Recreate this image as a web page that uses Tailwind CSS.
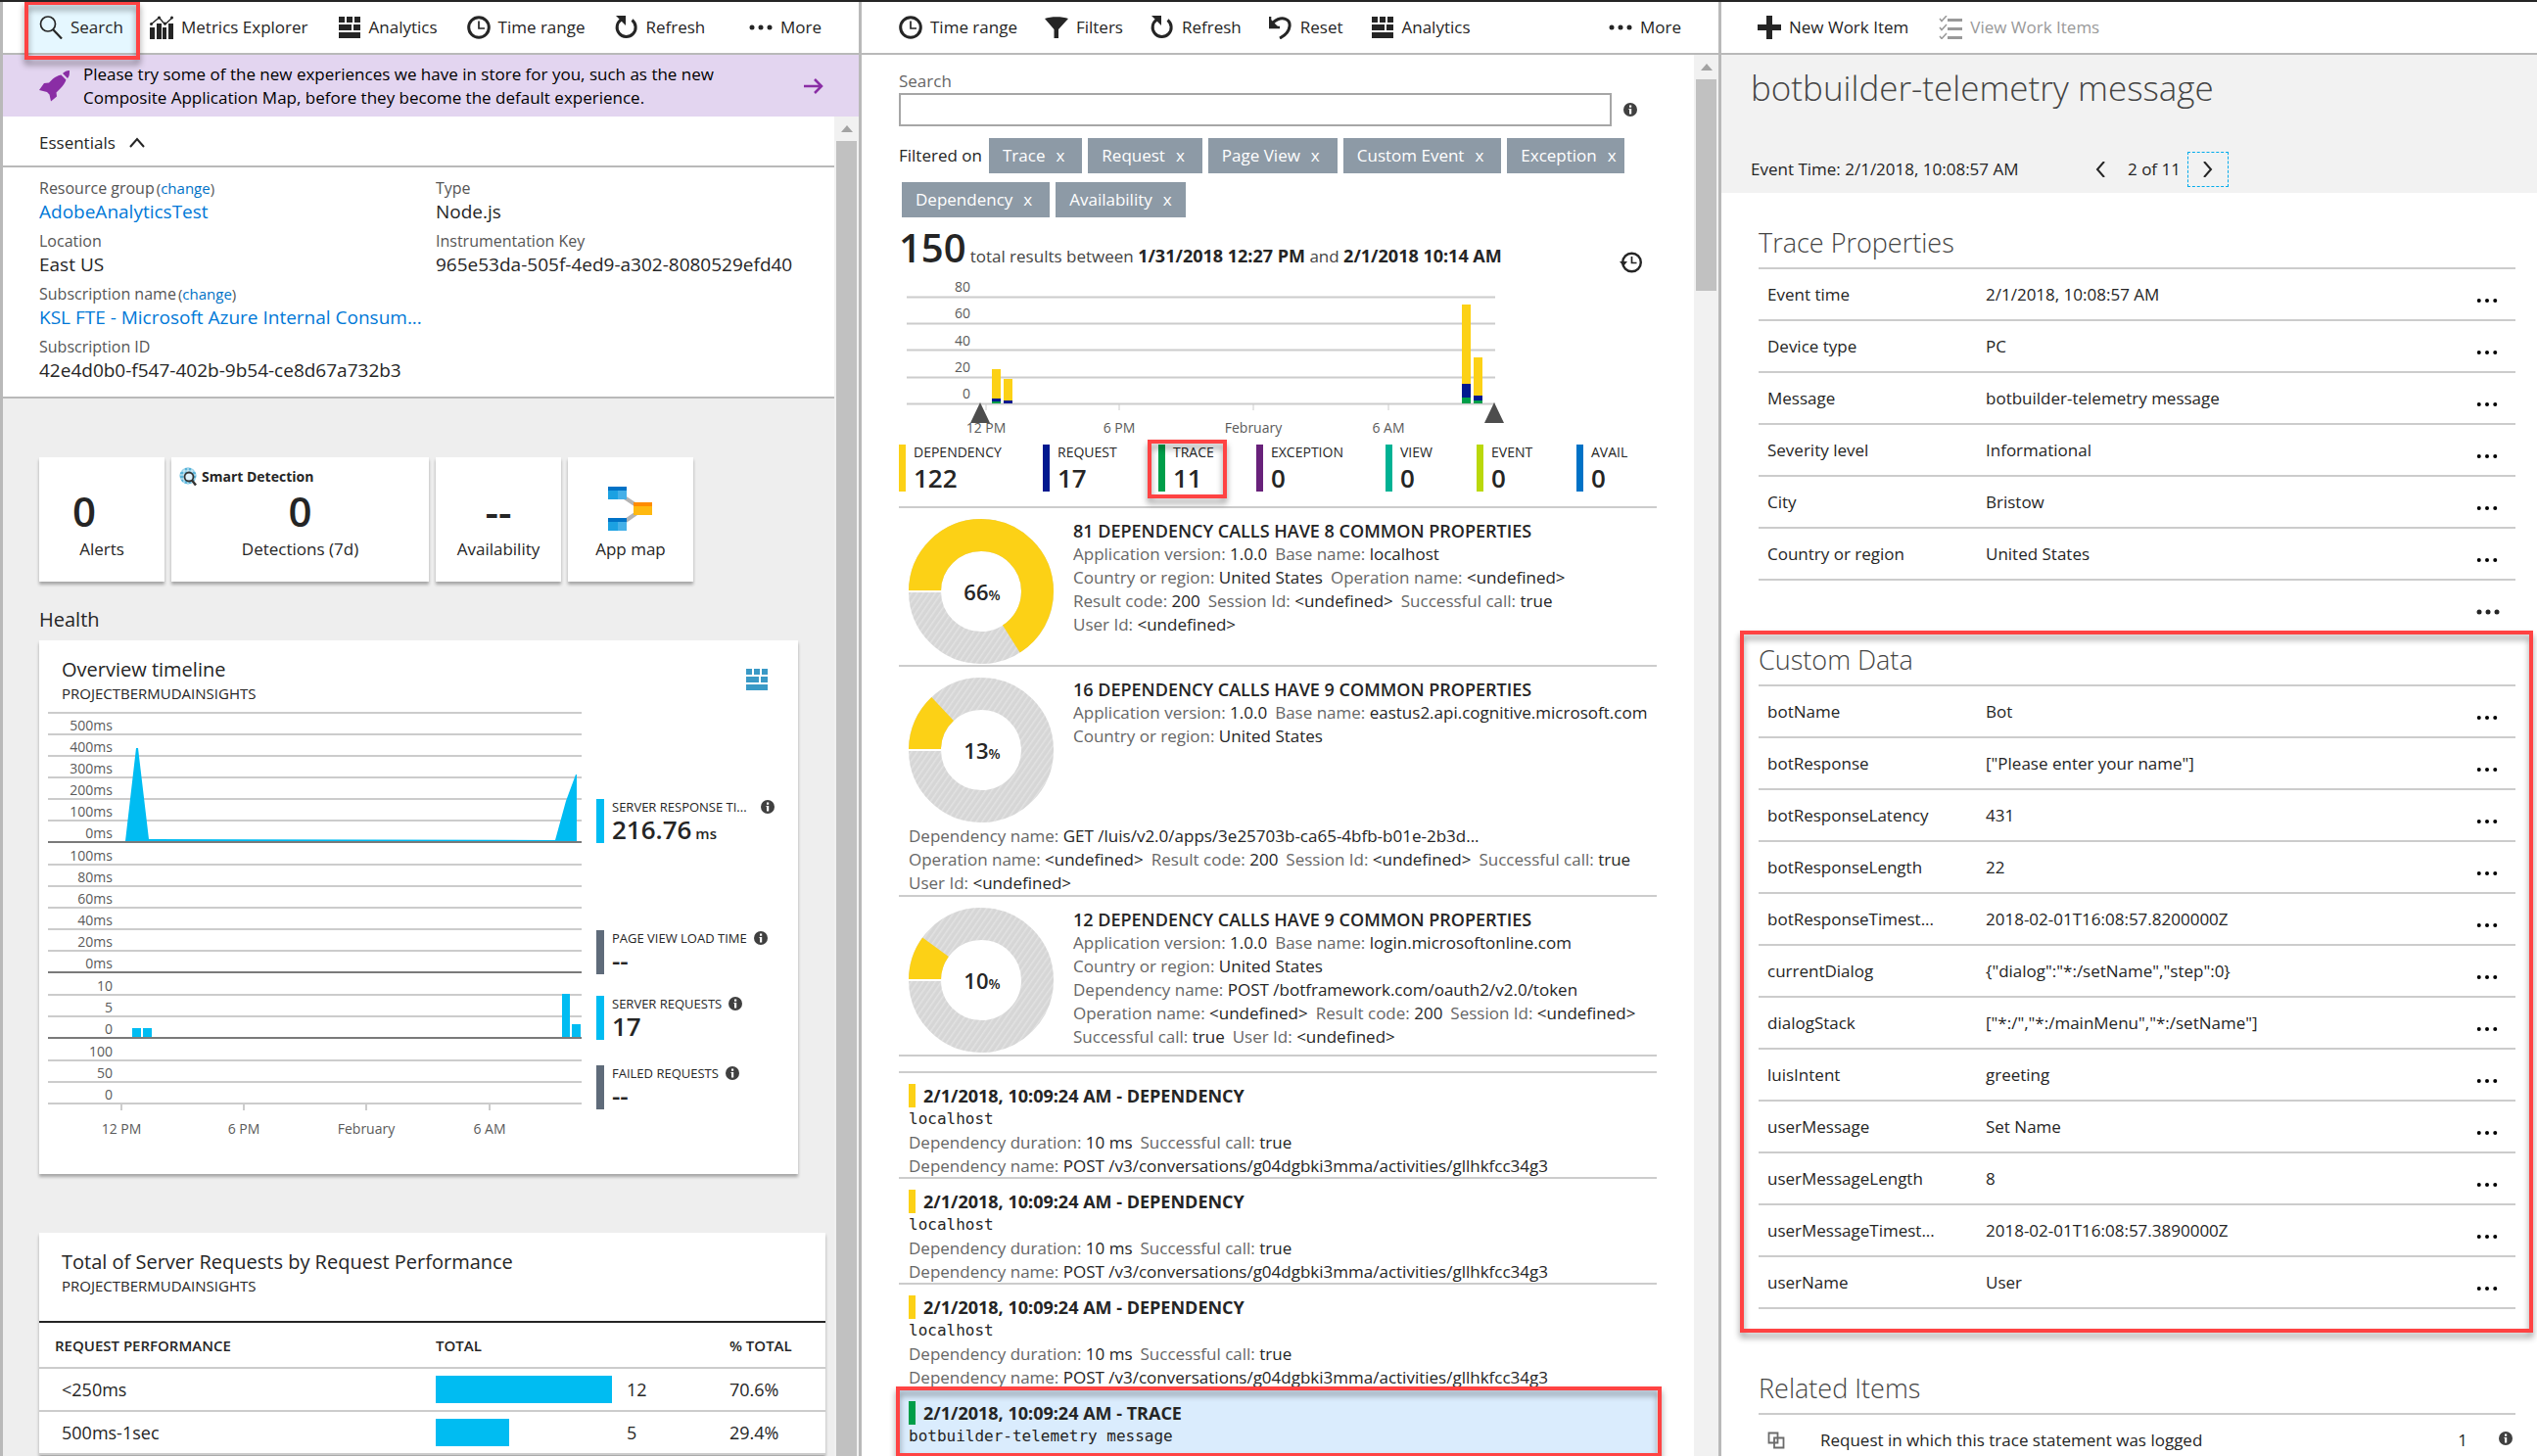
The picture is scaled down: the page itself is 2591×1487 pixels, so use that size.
<!DOCTYPE html>
<html lang="en">
<head>
<meta charset="utf-8">
<title>Application Insights</title>
<script src="https://cdn.jsdelivr.net/npm/@tailwindcss/browser@4"></script>
</head>
<body class="h-screen overflow-hidden bg-white font-['Open_Sans','Noto_Sans',sans-serif] text-[17px] leading-6 text-[#252525]">

<svg class="absolute size-0" aria-hidden="true">
  <symbol id="i-search" viewBox="0 0 24 24"><circle cx="9" cy="8.500" r="7.500" fill="none" stroke="currentColor" stroke-width="1.700"/><path d="M14 14l9 9.500" stroke="currentColor" stroke-width="2.200"/></symbol>
  <symbol id="i-metrics" viewBox="0 0 24 24"><path d="M0 12h5v12H0zM7 8h5v16H7zM13 12h4v12h-4zM19 8h5v16h-5z" fill="currentColor"/><path d="M1 9l8.500-7 6 7L23 2" fill="none" stroke="currentColor" stroke-width="1.300"/><circle cx="1.500" cy="8.500" r="1.500" fill="currentColor"/><circle cx="9.500" cy="2" r="1.600" fill="currentColor"/><circle cx="15.500" cy="8" r="1.500" fill="currentColor"/><circle cx="22.500" cy="2" r="1.500" fill="currentColor"/></symbol>
  <symbol id="i-analytics" viewBox="0 0 24 24"><path d="M1 1h6v6H1zM9 1h6v6H9zM17 1h6v6h-6zM1 9h13v6H1zM16 9h7v6h-7zM1 17h22v6H1z" fill="currentColor"/></symbol>
  <symbol id="i-clock" viewBox="0 0 24 24"><circle cx="12" cy="12" r="10.300" fill="none" stroke="currentColor" stroke-width="3"/><path d="M12 5.500V13h6" fill="none" stroke="currentColor" stroke-width="1.700"/></symbol>
  <symbol id="i-refresh" viewBox="0 0 24 24"><path d="M17.500 4.500A9.500 9.500 0 1 1 6.500 4" fill="none" stroke="currentColor" stroke-width="3"/><path d="M1 0h10v10z" fill="currentColor"/></symbol>
  <symbol id="i-reset" viewBox="0 0 24 24"><path d="M4 7C14-1 22 4 21 11c-.6 5-4 9-10 12" fill="none" stroke="currentColor" stroke-width="3"/><path d="M1 1v11h10" fill="none" stroke="currentColor" stroke-width="2.600"/><path d="M1 12V3l8 8z" fill="currentColor"/></symbol>
  <symbol id="i-filter" viewBox="0 0 24 24"><path d="M0 3l9.500 11v9h4.500v-9L24 3c-6-2.500-18-2.500-24 0z" fill="currentColor"/></symbol>
  <symbol id="i-dots" viewBox="0 0 24 24"><circle cx="3" cy="12" r="2.500" fill="currentColor"/><circle cx="12" cy="12" r="2.500" fill="currentColor"/><circle cx="21" cy="12" r="2.500" fill="currentColor"/></symbol>
  <symbol id="i-plus" viewBox="0 0 24 24"><path d="M9 0h6v9h9v6h-9v9H9v-9H0V9h9z" fill="currentColor"/></symbol>
  <symbol id="i-list" viewBox="0 0 24 24"><path d="M9 3h15v3H9zM9 12h15v3H9zM9 21h15v3H9z" fill="currentColor"/><path d="M1 3l2 2.500L8 0M1 12l2 2.500L8 9M1 21l2 2.500L8 18" fill="none" stroke="currentColor" stroke-width="1.500"/></symbol>
  <symbol id="i-info" viewBox="0 0 14 14"><circle cx="7" cy="7" r="7" fill="#404040"/><path d="M6 2.500h2.200v2.200H6zM5.500 6h2.700v5.500H6V7h-.5z" fill="#fff"/></symbol>
  <symbol id="i-history" viewBox="0 0 24 24"><circle cx="12.500" cy="12" r="9.300" fill="none" stroke="currentColor" stroke-width="2.400"/><path d="M0 11h8l-4 5z" fill="currentColor"/><path d="M12.500 6v6.500h5" fill="none" stroke="currentColor" stroke-width="1.700"/></symbol>
  <symbol id="i-copy" viewBox="0 0 18 18"><path d="M1.500 1.500h9v10h-9zM7 6.500h9.500v10H7z" fill="none" stroke="#6b6b6b" stroke-width="1.800"/></symbol>
  <pattern id="hatch" width="5" height="5" patternUnits="userSpaceOnUse" patternTransform="rotate(35)"><rect width="5" height="5" fill="#d6d6d6"/><rect width="1.500" height="5" fill="#e2e2e2"/></pattern>
</svg>

<div class="grid h-full grid-cols-[877fr_878fr_836fr] border-t-2 border-[#252525]">

  <!-- Overview blade -->
  <section class="flex min-w-0 flex-col overflow-hidden border-l-[3px] border-[#b9b9b9]">
    <div class="flex h-[54px] shrink-0 items-center gap-[30px] border-b-2 border-[#b9b9b9] pl-[22px] pr-[38px]">
      <div class="relative -mr-5 flex h-full w-[118px] items-center bg-[#e5f7ff]">
        <button class="flex items-center gap-2 pl-[15px]"><svg class="size-6"><use href="#i-search"/></svg>Search</button>
        <div class="absolute inset-x-0 -top-px z-10 h-[60px] border-4 border-[#ff4343] drop-shadow-[0_5px_3px_rgba(0,0,0,0.4)]"></div>
      </div>
      <button class="flex items-center gap-2"><svg class="size-6"><use href="#i-metrics"/></svg>Metrics Explorer</button>
      <button class="flex items-center gap-2"><svg class="size-6"><use href="#i-analytics"/></svg>Analytics</button>
      <button class="flex items-center gap-2"><svg class="size-6"><use href="#i-clock"/></svg>Time range</button>
      <button class="flex items-center gap-2"><svg class="size-6"><use href="#i-refresh"/></svg>Refresh</button>
      <button class="ml-auto flex items-center gap-2"><svg class="size-6"><use href="#i-dots"/></svg>More</button>
    </div>

    <a href="#" class="flex h-[63px] shrink-0 items-center bg-[#e3d5f0] pl-[37px] pr-9 text-black">
      <svg class="mr-[13px] size-8 shrink-0" viewBox="0 0 32 32" fill="#8a2da5"><path d="M31 0c-3 0-5 1-7 3l5 5c2-2 2-5 2-8zM22.500 4.500l5 5c-1 3-3 6-6 9l-4 4 .5 4-6 5-1.500-7-2.500-2.500L0 20l5-7 5-.5 4-4c3-2 5-3.500 8.500-4z"/></svg>
      <span class="w-[660px]">Please try some of the new experiences we have in store for you, such as the new Composite Application Map, before they become the default experience.</span>
      <svg class="ml-auto size-5 shrink-0" viewBox="0 0 20 20" fill="none" stroke="#8a2da5" stroke-width="2.500"><path d="M0 10h18M11 3l7 7-7 7"/></svg>
    </a>

    <div class="flex min-h-0 flex-1">
      <div class="min-w-0 flex-1 overflow-hidden bg-[#eee]">
        <div class="bg-white">
          <button class="flex h-[52px] w-full items-center gap-[14px] border-b-2 border-[#b9b9b9] pl-[37px] pt-1">Essentials <svg class="size-4" viewBox="0 0 16 16" fill="none" stroke="#252525" stroke-width="2"><path d="M1 12l7-8 7 8"/></svg></button>
          <div class="grid h-[236px] grid-cols-[405px_1fr] border-b-2 border-[#b9b9b9] pl-[37px] pt-[9px]">
            <dl id="ess-left"></dl>
            <dl id="ess-right"></dl>
          </div>
        </div>

        <div class="px-[37px] pt-[60px]">
          <div class="flex gap-[7px] text-center">
            <div class="h-[127px] w-32 bg-white pt-7 shadow-[0_3px_3px_rgba(0,0,0,0.3)]"><div class="pr-9 text-[42px] leading-[54px] font-semibold">0</div>Alerts</div>
            <div class="relative h-[127px] w-[263px] bg-white pt-7 shadow-[0_3px_3px_rgba(0,0,0,0.3)]">
              <div class="absolute left-2 top-2 flex items-center gap-[3px] text-[14px] font-bold"><svg class="size-5" viewBox="0 0 20 20"><circle cx="9" cy="9" r="8.500" fill="#59b4d9"/><path d="M2 4h14M1 8h16M1 12h16M5 1v15M9 1v16M13 1v15" stroke="#e5f4fb" stroke-width="1"/><circle cx="10" cy="10" r="4.500" fill="#dff1fa" stroke="#333" stroke-width="1.800"/><path d="M13 13.500l4 5" stroke="#333" stroke-width="2.500"/></svg>Smart Detection</div>
              <div class="text-[42px] leading-[54px] font-semibold">0</div>Detections (7d)</div>
            <div class="h-[127px] w-32 bg-white pt-7 shadow-[0_3px_3px_rgba(0,0,0,0.3)]"><div class="text-[42px] leading-[54px] font-semibold">--</div>Availability</div>
            <div class="h-[127px] w-32 bg-white pt-7 shadow-[0_3px_3px_rgba(0,0,0,0.3)]">
              <div class="flex h-[54px] items-center justify-center pb-1"><svg class="h-[46px] w-[46px]" viewBox="0 0 46 46"><path d="M12 8l23 15-23 16" fill="none" stroke="#b3b3b3" stroke-width="4"/><path d="M0 0h19v13H0zM0 32h19v13H0z" fill="#1ba1e2"/><path d="M10 0h9v13h-9zM10 32h9v13h-9z" fill="#45b0e8"/><path d="M0 0h19v4H0zM0 32h19v4H0z" fill="#0072c6"/><path d="M26 16h19v13H26z" fill="#ffb910"/><path d="M26 16h19v4H26z" fill="#ff8c00"/></svg></div>App map</div>
          </div>
          <h2 class="mt-6 text-[20px] leading-[30px]">Health</h2>

          <div class="mt-[6px] h-[545px] w-[775px] bg-white pt-4 shadow-[0_3px_3px_rgba(0,0,0,0.3)]">
            <div class="flex items-start justify-between pl-[23px] pr-[30px]">
              <div><h3 class="text-[20px] leading-7">Overview timeline</h3><p class="text-[15px] leading-5">PROJECTBERMUDAINSIGHTS</p></div>
              <svg class="mt-3 size-6 text-[#3999c6]"><use href="#i-analytics"/></svg>
            </div>
            <div class="mt-2 flex pl-[9px]">
              <svg class="h-[440px] w-[550px] shrink-0 text-[14px]" viewBox="0 0 550 440" fill="#5a5a5a">
                <g id="tl-grid"></g>
                <path d="M79 133L90 38l2 0L103 131h4L518 132 529 92 539 65h1V133z" fill="#00bcf2"/>
                <path d="M86 324h9v9h-9zM97 324h9v9h-9zM525 289h8v44h-8zM535 320h9v13h-9z" fill="#00bcf2"/>
                <g text-anchor="middle"><text x="75" y="432">12 PM</text><text x="200" y="432">6 PM</text><text x="325" y="432">February</text><text x="451" y="432">6 AM</text></g>
              </svg>
              <div id="tl-legend" class="ml-[10px] flex flex-col pt-[90px]"></div>
            </div>
          </div>

          <div class="-mr-7 mt-[60px] w-[803px] bg-white pt-4 shadow-[0_3px_3px_rgba(0,0,0,0.3)]">
            <h3 class="pl-[23px] text-[20px] leading-7">Total of Server Requests by Request Performance</h3>
            <p class="pl-[23px] text-[15px] leading-5">PROJECTBERMUDAINSIGHTS</p>
            <table class="mt-[26px] w-full table-fixed text-left">
              <thead><tr class="h-[47px] border-y-2 border-b-[#ccc] border-t-[#252525] text-[15px]"><th class="w-[405px] pl-4 font-semibold">REQUEST PERFORMANCE</th><th class="w-[195px] font-semibold">TOTAL</th><th class="w-[105px]"></th><th class="font-semibold">% TOTAL</th></tr></thead>
              <tbody class="text-[18px]">
                <tr class="h-11 border-b-2 border-[#ccc]"><td class="pl-[23px]">&lt;250ms</td><td><div class="h-7 w-[180px] bg-[#00bcf2]"></div></td><td>12</td><td>70.6%</td></tr>
                <tr class="h-11 border-b-2 border-[#ccc]"><td class="pl-[23px]">500ms-1sec</td><td><div class="h-7 w-[75px] bg-[#00bcf2]"></div></td><td>5</td><td>29.4%</td></tr>
              </tbody>
            </table>
          </div>
        </div>
      </div>
      <div class="flex w-[25px] flex-col items-center bg-[#f1f1f1]"><svg class="my-[9px] h-[7px] w-3" viewBox="0 0 12 7"><path d="M0 7l6-7 6 7z" fill="#a3a3a3"/></svg><div class="w-[21px] flex-1 bg-[#c1c1c1]"></div></div>
    </div>
  </section>

  <!-- Search blade -->
  <section class="flex min-w-0 flex-col overflow-hidden border-l-[3px] border-[#b9b9b9]">
    <div class="flex h-[54px] shrink-0 items-center gap-[28px] border-b-2 border-[#b9b9b9] pl-[38px] pr-[38px]">
      <button class="flex items-center gap-2"><svg class="size-6"><use href="#i-clock"/></svg>Time range</button>
      <button class="flex items-center gap-2"><svg class="size-6"><use href="#i-filter"/></svg>Filters</button>
      <button class="flex items-center gap-2"><svg class="size-6"><use href="#i-refresh"/></svg>Refresh</button>
      <button class="flex items-center gap-2"><svg class="size-6"><use href="#i-reset"/></svg>Reset</button>
      <button class="flex items-center gap-2"><svg class="size-6"><use href="#i-analytics"/></svg>Analytics</button>
      <button class="ml-auto flex items-center gap-2"><svg class="size-6"><use href="#i-dots"/></svg>More</button>
    </div>
    <div class="flex min-h-0 flex-1">
      <div class="min-w-0 flex-1 overflow-hidden pl-[38px] pr-[38px] pt-[15px]">
        <label for="q" class="block text-[#666]">Search</label>
        <div class="flex items-center gap-3">
          <input id="q" type="text" class="h-[34px] w-[728px] border-2 border-[#a6a6a6] px-2 outline-none">
          <svg class="size-[14px]"><use href="#i-info"/></svg>
        </div>
        <div id="chips-1" class="mt-3 flex items-center gap-[6px]"><span class="w-[86px] whitespace-nowrap">Filtered on</span></div>
        <div id="chips-2" class="mt-[9px] flex gap-[6px] pl-[3px]"></div>
        <div class="mt-1 flex h-14 items-end justify-between">
          <p class="leading-10 text-[#444]"><span class="mr-1 text-[40px] font-semibold text-[#252525]">150</span>total results between <b class="text-[18px] font-bold text-[#252525]">1/31/2018 12:27 PM</b> and <b class="text-[18px] font-bold text-[#252525]">2/1/2018 10:14 AM</b></p>
          <svg class="mb-[2px] mr-[14px] size-6"><use href="#i-history"/></svg>
        </div>
        <svg class="h-[168px] w-[640px] text-[14px]" viewBox="0 0 640 168" fill="#5a5a5a">
          <path d="M8 21.500h601M8 48.500h601M8 75.500h601M8 103.500h601M8 130.500h601" stroke="#ccc" stroke-width="2"/>
          <path d="M89 131v6M225 131v6M362 131v6M500 131v6" stroke="#ccc"/>
          <g text-anchor="end"><text x="73" y="16">80</text><text x="73" y="43">60</text><text x="73" y="71">40</text><text x="73" y="98">20</text><text x="73" y="125">0</text></g>
          <g text-anchor="middle"><text x="89" y="160">12 PM</text><text x="225" y="160">6 PM</text><text x="362" y="160">February</text><text x="500" y="160">6 AM</text></g>
          <path d="M95 95h9v30h-9zM107 105h9v22h-9zM575 29h9v81h-9zM587 83h9v39h-9z" fill="#fcd116"/>
          <path d="M95 125h9v3h-9zM107 127h9v3h-9zM575 110h9v14h-9zM587 122h9v5h-9z" fill="#00188f"/>
          <path d="M95 128h9v2h-9zM575 124h9v6h-9zM587 127h9v3h-9z" fill="#009e49"/>
          <path d="M83 129l10 21H73zM608 129l10 21h-20z" fill="#4d4d4d"/>
        </svg>
        <div id="stats" class="mt-[4px] flex h-[65px] border-b-2 border-[#ccc]"></div>

        <div id="clusters"></div>
        <div class="h-[17px] border-b-2 border-[#ccc]"></div>
        <div id="events"></div>
      </div>
      <div class="flex w-[25px] flex-col items-center bg-[#f1f1f1]"><svg class="my-[9px] h-[7px] w-3" viewBox="0 0 12 7"><path d="M0 7l6-7 6 7z" fill="#a3a3a3"/></svg><div class="h-[216px] w-[21px] bg-[#c1c1c1]"></div></div>
    </div>
  </section>

  <!-- Trace details blade -->
  <section class="flex min-w-0 flex-col overflow-hidden border-l-[3px] border-[#b9b9b9]">
    <div class="flex h-[54px] shrink-0 items-center gap-[31px] border-b-2 border-[#b9b9b9] pl-[37px]">
      <button class="flex items-center gap-2"><svg class="size-6"><use href="#i-plus"/></svg>New Work Item</button>
      <button class="flex items-center gap-2 text-[#999]" disabled><svg class="size-6"><use href="#i-list"/></svg>View Work Items</button>
    </div>
    <header class="h-[141px] shrink-0 bg-[#f2f2f2] pl-[30px] pt-[10px]">
      <h1 class="text-[35px] leading-[48px] font-light text-[#444]">botbuilder-telemetry message</h1>
      <div class="mt-[41px] flex h-9 items-center">
        <span class="w-[340px]">Event Time: 2/1/2018, 10:08:57 AM</span>
        <button class="w-[45px] pl-3" aria-label="Previous"><svg class="h-4 w-[10px]" viewBox="0 0 10 16" fill="none" stroke="#252525" stroke-width="2"><path d="M9 0L2 8l7 8"/></svg></button>
        <span class="w-[61px] whitespace-nowrap">2 of 11</span>
        <button class="flex h-9 w-[42px] items-center justify-center border border-dashed border-[#00abec]" aria-label="Next"><svg class="h-4 w-[10px]" viewBox="0 0 10 16" fill="none" stroke="#252525" stroke-width="2"><path d="M1 0l7 8-7 8"/></svg></button>
      </div>
    </header>
    <div class="pl-[38px] pr-[22px]">
      <h2 class="mt-[31px] h-[45px] text-[27px] leading-10 font-light text-[#444]">Trace Properties</h2>
      <table id="trace-props" class="w-full table-fixed border-t-2 border-[#ccc]"></table>
      <div class="flex h-[51px] items-center justify-end pr-4 pt-3"><button aria-label="More"><svg class="size-6"><use href="#i-dots"/></svg></button></div>
      <div class="relative h-[717px] pt-[10px]">
        <h2 class="h-[45px] text-[27px] leading-10 font-light text-[#444]">Custom Data</h2>
        <table id="custom-data" class="w-full table-fixed border-t-2 border-[#ccc]"></table>
        <div class="pointer-events-none absolute -left-[19px] -right-[18px] inset-y-0 border-4 border-[#ff4343] drop-shadow-[0_5px_3px_rgba(0,0,0,0.4)]"></div>
      </div>
      <h2 class="mt-[37px] h-[45px] text-[27px] leading-10 font-light text-[#444]">Related Items</h2>
      <div class="flex h-[53px] items-center border-t-2 border-[#ccc] pl-[9px] pr-[3px]">
        <svg class="mr-[36px] size-[18px]"><use href="#i-copy"/></svg>
        <a href="#">Request in which this trace statement was logged</a>
        <span class="ml-auto mr-8">1</span>
        <svg class="mb-1 size-[14px]"><use href="#i-info"/></svg>
      </div>
    </div>
  </section>
</div>

<script>
const $ = id => document.getElementById(id);
const esc = s => s.replace(/</g, '&lt;').replace(/>/g, '&gt;');

// Essentials
const ess = ([label, value, change, link]) => `<dt class="h-6 text-[16px] text-[#555]">${label}${change ? '<span class="ml-[2px] text-[15px]">(<a href="#" class="text-[#0072c6]">change</a>)</span>' : ''}</dt><dd class="h-[30px] text-[19px]">${link ? `<a href="#" class="text-[#0078d7]">${value}</a>` : value}</dd>`;
$('ess-left').innerHTML = [['Resource group', 'AdobeAnalyticsTest', 1, 1], ['Location', 'East US'], ['Subscription name', 'KSL FTE - Microsoft Azure Internal Consum...', 1, 1], ['Subscription ID', '42e4d0b0-f547-402b-9b54-ce8d67a732b3']].map(ess).join('');
$('ess-right').innerHTML = [['Type', 'Node.js'], ['Instrumentation Key', '965e53da-505f-4ed9-a302-8080529efd40']].map(ess).join('');

// Timeline grid: one group of labelled lines per metric
let grid = '', y = 2;
[['500ms', '400ms', '300ms', '200ms', '100ms', '0ms'], ['100ms', '80ms', '60ms', '40ms', '20ms', '0ms'], ['10', '5', '0'], ['100', '50', '0']].forEach((labels, g) => {
  labels.forEach((t, i) => {
    grid += `<text x="66" y="${y + 18}" text-anchor="end">${t}</text>`;
    y += 22;
    const base = i === labels.length - 1 && g < 3;
    grid += `<path d="M0 ${y}h545" stroke="${base ? '#7a7a7a' : '#ccc'}" stroke-width="2"/>`;
  });
  y += 1;
});
grid += '<path d="M0 2h545" stroke="#ccc" stroke-width="2"/><path d="M75 402v6M200 402v6M325 402v6M451 402v6" stroke="#ccc" stroke-width="2"/>';
$('tl-grid').innerHTML = grid;
$('tl-legend').innerHTML = [['SERVER RESPONSE TI...', '216.76', 'border-[#00bcf2] mb-[89px]', ' ms', 'gap-[14px]'], ['PAGE VIEW LOAD TIME', '--', 'border-[#5f6b7a] mb-[22px]', '', 'gap-[7px]'], ['SERVER REQUESTS', '17', 'border-[#00bcf2] mb-[26px]', '', 'gap-[7px]'], ['FAILED REQUESTS', '--', 'border-[#5f6b7a]', '', 'gap-[7px]']].map(([l, v, c, u, gap]) =>
  `<div class="h-[45px] border-l-8 pl-2 ${c}"><div class="flex h-4 items-center whitespace-nowrap text-[13px] ${gap}">${l}<svg class="size-[14px]"><use href="#i-info"/></svg></div><div class="text-[26px] leading-[30px] font-semibold">${v}<span class="text-[15px]">${u}</span></div></div>`).join('');

// Filter chips
const chip = (t, pad) => `<button class="flex h-9 items-center gap-[11px] whitespace-nowrap bg-[#8d9aa6] pl-[14px] text-white ${pad || 'pr-[18px]'}">${t}<span>x</span></button>`;
$('chips-1').insertAdjacentHTML('beforeend', ['Trace', 'Request', 'Page View', 'Custom Event'].map(t => chip(t)).join('') + chip('Exception', 'pr-2'));
$('chips-2').innerHTML = chip('Dependency') + chip('Availability', 'pr-[14px]');

// Totals by type
$('stats').innerHTML = [['DEPENDENCY', 122, 'w-[147px] border-[#fcd116]'], ['REQUEST', 17, 'w-[118px] border-[#00188f]'], ['TRACE', 11, 'w-[100px] border-[#009e49]'], ['EXCEPTION', 0, 'w-[132px] border-[#68217a]'], ['VIEW', 0, 'w-[93px] border-[#00b294]'], ['EVENT', 0, 'w-[102px] border-[#bad80a]'], ['AVAIL', 0, 'w-[70px] border-[#0072c6]']].map(([l, n, c]) =>
  `<div class="relative h-12 border-l-[7px] pl-2 ${c}"><div class="text-[14px] leading-4">${l}</div><div class="text-[26px] leading-9 font-semibold">${n}</div>${l === 'TRACE' ? '<div class="absolute -left-[18px] -top-[5px] h-[60px] w-[81px] border-4 border-[#ff4343] drop-shadow-[0_5px_3px_rgba(0,0,0,0.4)]"></div>' : ''}</div>`).join('');

// "Label: value" pairs
const pairs = s => s.split('|').map(p => { const i = p.indexOf(':'); return `<span class="text-[#666]">${p.slice(0, i + 1)}</span> ${esc(p.slice(i + 2))}`; }).join('<span class="inline-block w-2"></span>');
const donut = n => `<svg class="size-[148px] shrink-0" viewBox="0 0 148 148"><circle cx="74" cy="74" r="57.5" fill="none" stroke="url(#hatch)" stroke-width="33"/><circle cx="74" cy="74" r="57.5" fill="none" stroke="#fcd116" stroke-width="33" pathLength="100" stroke-dasharray="${n} 100" transform="rotate(180 74 74)"/><path d="M0 74h33" stroke="#fff" stroke-width="2"/><text x="75" y="83" text-anchor="middle" font-size="22" font-weight="600" fill="#252525">${n}<tspan font-size="14">%</tspan></text></svg>`;
const U = '<undefined>';
$('clusters').innerHTML = [
  [66, 81, 8, 'h-[162px]', ['Application version: 1.0.0|Base name: localhost', `Country or region: United States|Operation name: ${U}`, `Result code: 200|Session Id: ${U}|Successful call: true`, `User Id: ${U}`], []],
  [13, 16, 9, 'h-[235px]', ['Application version: 1.0.0|Base name: eastus2.api.cognitive.microsoft.com', 'Country or region: United States'], ['Dependency name: GET /luis/v2.0/apps/3e25703b-ca65-4bfb-b01e-2b3d...', `Operation name: ${U}|Result code: 200|Session Id: ${U}|Successful call: true`, `User Id: ${U}`]],
  [10, 12, 9, 'h-[163px]', ['Application version: 1.0.0|Base name: login.microsoftonline.com', 'Country or region: United States', 'Dependency name: POST /botframework.com/oauth2/v2.0/token', `Operation name: ${U}|Result code: 200|Session Id: ${U}`, `Successful call: true|User Id: ${U}`], []]
].map(([pct, n, p, h, side, below]) => `<article class="${h} border-b-2 border-[#ccc] pl-[10px] pt-[11px] whitespace-nowrap"><div class="mb-[2px] flex gap-5">${donut(pct)}<div><h3 class="text-[18px] font-semibold">${n} DEPENDENCY CALLS HAVE ${p} COMMON PROPERTIES</h3>${side.map(s => `<p>${pairs(s)}</p>`).join('')}</div></div>${below.map(s => `<p>${pairs(s)}</p>`).join('')}</article>`).join('');

// Individual events
const bar = c => `<span class="h-6 w-[7px] ${c}"></span>`;
const dep = `<article class="h-[108px] border-b-2 border-[#ccc] pl-[10px] pt-[11px] whitespace-nowrap"><h3 class="flex gap-2 text-[18px] font-bold">${bar('bg-[#fcd116]')}2/1/2018, 10:09:24 AM - DEPENDENCY</h3><p class="font-['DejaVu_Sans_Mono',monospace] text-[16px]">localhost</p><p>${pairs('Dependency duration: 10 ms|Successful call: true')}</p><p>${pairs('Dependency name: POST /v3/conversations/g04dgbki3mma/activities/gllhkfcc34g3')}</p></article>`;
$('events').innerHTML = dep + dep + dep + `<article class="relative h-[68px] bg-[#daecfd] pl-[10px] pt-[11px] whitespace-nowrap"><h3 class="flex gap-2 text-[18px] font-bold">${bar('bg-[#009e49]')}2/1/2018, 10:09:24 AM - TRACE</h3><p class="font-['DejaVu_Sans_Mono',monospace] text-[16px]">botbuilder-telemetry message</p><div class="absolute -left-[3px] -right-[5px] -top-[4px] bottom-0 border-4 border-[#ff4343] drop-shadow-[0_5px_3px_rgba(0,0,0,0.4)]"></div></article>`;

// Property tables
const rows = list => '<tbody>' + list.map(([k, v]) => `<tr class="h-[53px] border-b-2 border-[#ccc]"><th scope="row" class="w-[232px] pl-[9px] text-left font-normal">${k}</th><td>${v}</td><td class="w-[40px] pt-3"><button class="block" aria-label="More"><svg class="h-[22px] w-[22px]" viewBox="0 0 24 24"><circle cx="3" cy="12" r="2.200"/><circle cx="12" cy="12" r="2.200"/><circle cx="21" cy="12" r="2.200"/></svg></button></td></tr>`).join('') + '</tbody>';
$('trace-props').innerHTML = rows([['Event time', '2/1/2018, 10:08:57 AM'], ['Device type', 'PC'], ['Message', 'botbuilder-telemetry message'], ['Severity level', 'Informational'], ['City', 'Bristow'], ['Country or region', 'United States']]);
$('custom-data').innerHTML = rows([['botName', 'Bot'], ['botResponse', '["Please enter your name"]'], ['botResponseLatency', '431'], ['botResponseLength', '22'], ['botResponseTimest...', '2018-02-01T16:08:57.8200000Z'], ['currentDialog', '{"dialog":"*:/setName","step":0}'], ['dialogStack', '["*:/","*:/mainMenu","*:/setName"]'], ['luisIntent', 'greeting'], ['userMessage', 'Set Name'], ['userMessageLength', '8'], ['userMessageTimest...', '2018-02-01T16:08:57.3890000Z'], ['userName', 'User']]);
</script>
</body>
</html>
